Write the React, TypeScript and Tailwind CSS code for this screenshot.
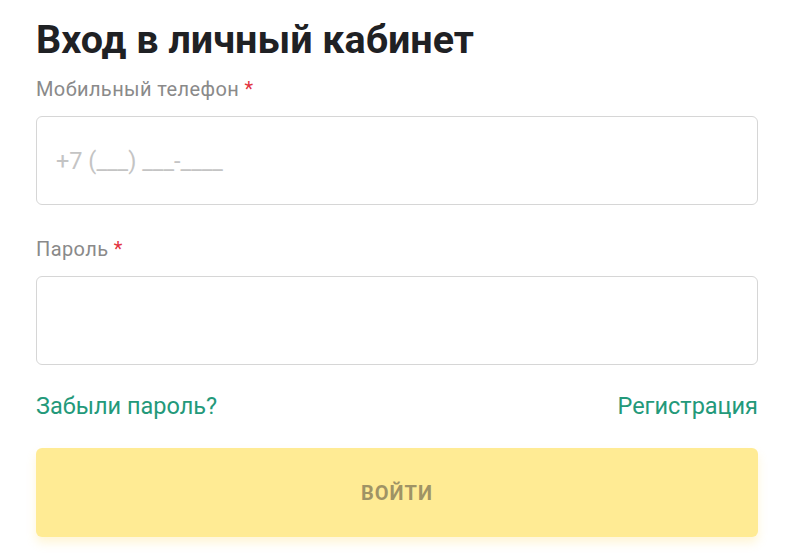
import React from 'react';

const App: React.FC = () => {
  return (
    <div className="min-h-[558px] w-[800px] bg-white font-['Roboto',sans-serif]">
      <form className="flex flex-col pl-9 pr-[42px] pt-[16px]">
        <h1 className="text-[39.5px] leading-[48px] font-bold text-[#1f2124]">Вход в личный кабинет</h1>

        <label className="mt-[13px] text-[20px] leading-[24px] tracking-[0.4px] text-[#8a8a8a]">
          Мобильный телефон <span className="text-[#e2343f]">*</span>
        </label>
        <input
          type="tel"
          placeholder="+7 (___) ___-____"
          className="mt-[15px] h-[89px] w-full rounded-[6px] border border-[#d6d6d6] px-[19px] text-[23.5px] text-[#333] placeholder-[#c4c4c4] outline-none"
        />

        <label className="mt-[32px] text-[20px] leading-[24px] tracking-[0.4px] text-[#8a8a8a]">
          Пароль <span className="text-[#e2343f]">*</span>
        </label>
        <input
          type="password"
          className="mt-[15px] h-[89px] w-full rounded-[6px] border border-[#d6d6d6] px-[19px] text-[22px] outline-none"
        />

        <div className="mt-[27px] flex items-center justify-between text-[23.5px] leading-[28px] text-[#23997a]">
          <a href="#">Забыли пароль?</a>
          <a href="#">Регистрация</a>
        </div>

        <button
          type="submit"
          className="mt-[28px] h-[89px] w-full rounded-[6px] bg-[#ffeb94] text-[20px] font-bold tracking-[1px] text-[#9f9365] shadow-[0_6px_10px_rgba(255,220,100,0.25)]"
        >
          ВОЙТИ
        </button>
      </form>
    </div>
  );
};

export default App;
